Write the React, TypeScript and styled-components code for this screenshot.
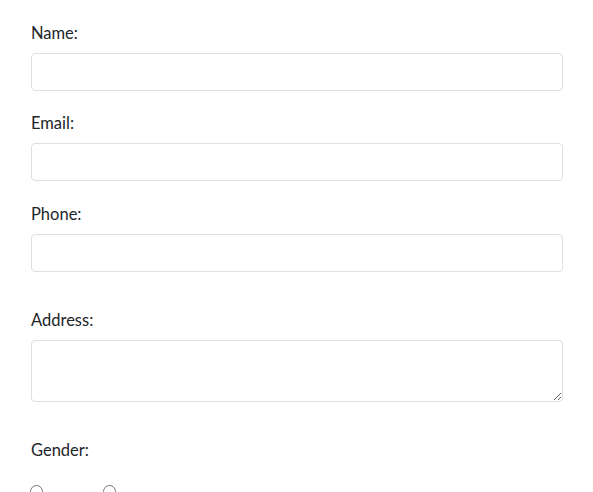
import React from "react";
import styled, { createGlobalStyle } from "styled-components";

const Global = createGlobalStyle`
  html, body { margin: 0; padding: 0; background: #fff; }
  body {
    font-family: Lato, "Liberation Sans", sans-serif;
    font-size: 16px;
    line-height: 1.5;
    color: #212529;
  }
  * { box-sizing: border-box; }
`;

const Form = styled.form`
  display: flex;
  flex-direction: column;
  padding: 21px 30px 0 31px;
`;

const Group = styled.div<{ $gap?: number }>`
  display: flex;
  flex-direction: column;
  margin-bottom: ${(p) => p.$gap ?? 21}px;
`;

const Label = styled.label`
  display: block;
  font-size: 16.5px;
  line-height: 24px;
  margin-bottom: 8px;
  color: #212529;
`;

const Input = styled.input`
  display: block;
  width: 100%;
  height: 38px;
  padding: 6px 12px;
  font: inherit;
  color: #495057;
  background: #fff;
  border: 1px solid #dcdfe4;
  border-radius: 4px;
  outline: none;
`;

const TextArea = styled.textarea`
  display: block;
  width: 100%;
  height: 62px;
  padding: 6px 12px;
  font: inherit;
  color: #495057;
  background: #fff;
  border: 1px solid #dcdfe4;
  border-radius: 4px;
  outline: none;
  resize: vertical;
`;

const RadioRow = styled.div`
  display: flex;
  margin-top: 15px;
  margin-left: -1px;
`;

const RadioOption = styled.label`
  display: flex;
  align-items: flex-start;
  gap: 6px;
  width: 73px;
`;

const Radio = styled.input`
  width: 13px;
  height: 13px;
  margin: 0;
  flex: none;
`;

const RadioText = styled.span`
  padding-top: 12px;
  font-size: 16px;
`;

export default function App() {
  return (
    <>
      <Global />
      <Form onSubmit={(e) => e.preventDefault()}>
        <Group $gap={20}>
          <Label htmlFor="name">Name:</Label>
          <Input id="name" type="text" />
        </Group>
        <Group $gap={21}>
          <Label htmlFor="email">Email:</Label>
          <Input id="email" type="email" />
        </Group>
        <Group $gap={36}>
          <Label htmlFor="phone">Phone:</Label>
          <Input id="phone" type="tel" />
        </Group>
        <Group $gap={36}>
          <Label htmlFor="address">Address:</Label>
          <TextArea id="address" rows={2} />
        </Group>
        <Group $gap={0}>
          <Label>Gender:</Label>
          <RadioRow>
            <RadioOption>
              <Radio type="radio" name="gender" value="male" />
              <RadioText>Male</RadioText>
            </RadioOption>
            <RadioOption>
              <Radio type="radio" name="gender" value="female" />
              <RadioText>Female</RadioText>
            </RadioOption>
          </RadioRow>
        </Group>
      </Form>
    </>
  );
}
